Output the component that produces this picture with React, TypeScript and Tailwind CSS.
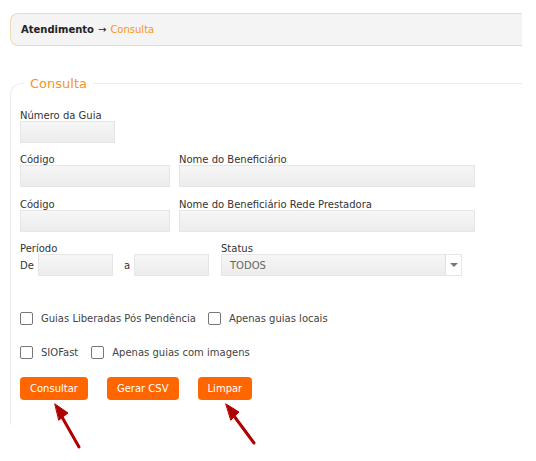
import React from "react"

const font = { fontFamily: '"DejaVu Sans", Verdana, sans-serif' }

function Field({ label, width, className = "" }: { label: string; width: string; className?: string }) {
  return (
    <div className={className}>
      <div className="text-[10px] leading-[10px] pt-[4px] text-[#333]">{label}</div>
      <div className={`${width} h-[22px] border border-[#e6e6e6] bg-gradient-to-b from-[#f6f6f6] to-[#ececec]`} />
    </div>
  )
}

function Check({ label }: { label: string }) {
  return (
    <label className="flex items-center gap-[8px] text-[10px] text-[#444]">
      <span className="w-[13px] h-[13px] border border-[#777] rounded-[2px] bg-white" />
      {label}
    </label>
  )
}

export default function App() {
  return (
    <div className="relative h-[461px] w-[536px] bg-white overflow-hidden pt-[13px] pl-[10px]" style={font}>
      {/* Breadcrumb */}
      <div className="w-[512px] h-[33px] flex items-center pl-[10px] bg-[#f4f4f4] border border-r-0 border-[#f4d8b4] rounded-l-[8px] text-[10px]">
        <span className="font-bold text-[#222]">Atendimento</span>
        <span className="text-[#222] mx-[4px]">→</span>
        <span className="text-[#f7941d]">Consulta</span>
      </div>

      {/* Consulta */}
      <fieldset className="mt-[29px] w-[512px] h-[350px] border-t border-l border-[#ececec] rounded-tl-[12px] pl-[9px]">
        <legend className="ml-[4px] px-[6px] text-[13px] leading-[17px] text-[#f7941d]">Consulta</legend>

        <Field label="Número da Guia" width="w-[95px]" className="mt-[15px]" />

        <div className="flex gap-[9px] mt-[8px]">
          <Field label="Código" width="w-[150px]" />
          <Field label="Nome do Beneficiário" width="w-[296px]" />
        </div>

        <div className="flex gap-[9px] mt-[9px]">
          <Field label="Código" width="w-[150px]" />
          <Field label="Nome do Beneficiário Rede Prestadora" width="w-[296px]" />
        </div>

        <div className="flex mt-[8px]">
          <div className="w-[201px]">
            <div className="text-[10px] leading-[10px] pt-[4px] text-[#333]">Período</div>
            <div className="flex items-center h-[22px] text-[10px] text-[#333]">
              <span className="w-[18px]">De</span>
              <div className="w-[75px] h-[22px] border border-[#e6e6e6] bg-gradient-to-b from-[#f6f6f6] to-[#ececec]" />
              <span className="w-[21px] pl-[11px]">a</span>
              <div className="w-[75px] h-[22px] border border-[#e6e6e6] bg-gradient-to-b from-[#f6f6f6] to-[#ececec]" />
            </div>
          </div>
          <div>
            <div className="text-[10px] leading-[10px] pt-[4px] text-[#333]">Status</div>
            <div className="flex w-[241px] h-[22px] border border-[#e6e6e6] bg-gradient-to-b from-[#f6f6f6] to-[#ececec]">
              <div className="flex-1 flex items-center pl-[8px] text-[10px] text-[#666]">TODOS</div>
              <div className="w-[16px] border-l border-[#e0e0e0] bg-white flex items-center justify-center">
                <span className="w-0 h-0 border-l-[4px] border-r-[4px] border-t-[4px] border-l-transparent border-r-transparent border-t-[#777]" />
              </div>
            </div>
          </div>
        </div>

        <div className="flex gap-[12px] mt-[34px] h-[16px]">
          <Check label="Guias Liberadas Pós Pendência" />
          <Check label="Apenas guias locais" />
        </div>

        <div className="flex gap-[13px] mt-[18px] h-[16px]">
          <Check label="SIOFast" />
          <Check label="Apenas guias com imagens" />
        </div>

        <div className="flex gap-[19px] mt-[17px]">
          <button className="h-[23px] px-[10px] rounded-[4px] bg-[#ff6600] text-white text-[10px]">Consultar</button>
          <button className="h-[23px] px-[10px] rounded-[4px] bg-[#ff6600] text-white text-[10px]">Gerar CSV</button>
          <button className="h-[23px] px-[10px] rounded-[4px] bg-[#ff6600] text-white text-[10px]">Limpar</button>
        </div>
      </fieldset>

      {/* Annotation arrows */}
      <svg className="absolute left-0 top-0 pointer-events-none" width="536" height="461">
        <g stroke="#b00000" strokeWidth="3" fill="#b00000" strokeLinecap="round">
          <line x1="79" y1="447" x2="62" y2="417" />
          <polygon points="55,404 68,413 59,420" strokeWidth="1" strokeLinejoin="round" />
          <line x1="254" y1="443" x2="234" y2="416" />
          <polygon points="226,404 239,412 231,420" strokeWidth="1" strokeLinejoin="round" />
        </g>
      </svg>
    </div>
  )
}
